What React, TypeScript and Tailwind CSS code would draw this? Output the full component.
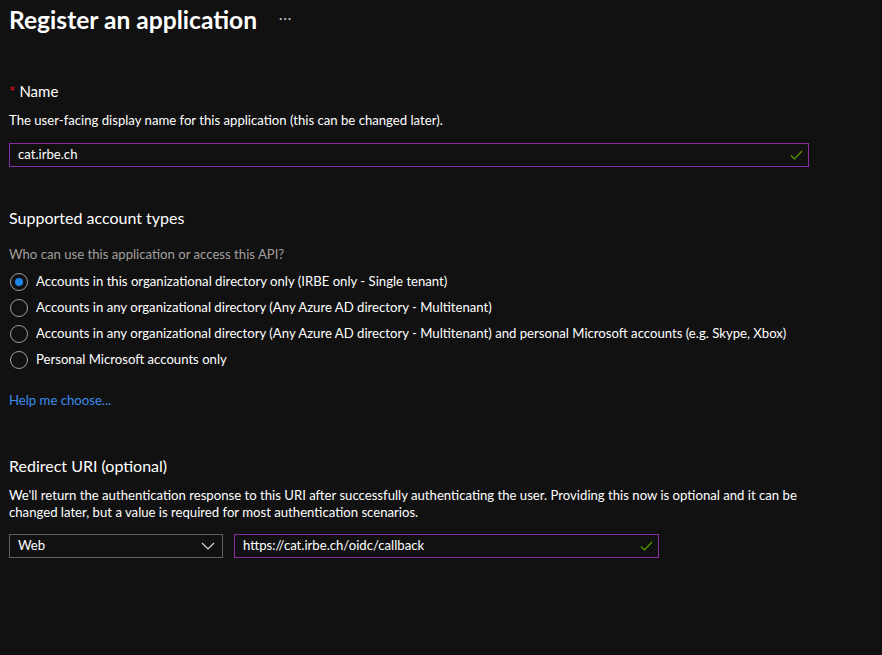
import React from "react";

const options = [
  "Accounts in this organizational directory only (IRBE only - Single tenant)",
  "Accounts in any organizational directory (Any Azure AD directory - Multitenant)",
  "Accounts in any organizational directory (Any Azure AD directory - Multitenant) and personal Microsoft accounts (e.g. Skype, Xbox)",
  "Personal Microsoft accounts only",
];

const Check = () => (
  <svg width="13" height="10" viewBox="0 0 13 10" className="shrink-0">
    <path d="M1 5.5 L4.5 9 L12 1" fill="none" stroke="#57a300" strokeWidth="1.2" />
  </svg>
);

const App: React.FC = () => {
  return (
    <div
      className="w-[882px] h-[655px] bg-[#111111] text-white px-[9px] overflow-hidden"
      style={{ fontFamily: "Lato, 'Noto Sans', sans-serif" }}
    >
      {/* Header */}
      <div className="flex items-center h-[40px] pt-[1px]">
        <h1 className="text-[24.6px] font-bold leading-none">Register an application</h1>
        <span className="ml-[22px] text-[13px] text-[#c8c6c4] tracking-[1px] -mt-[4px]">···</span>
      </div>

      {/* Name */}
      <div className="mt-[41px] flex items-center text-[15px] leading-[20px]">
        <span className="text-[#e81123] mr-[4px]">*</span>
        <span>Name</span>
      </div>
      <p className="mt-[11px] text-[13.15px] leading-[17px]">
        The user-facing display name for this application (this can be changed later).
      </p>
      <div className="mt-[14px] w-[800px] h-[24px] border border-[#8a2da5] flex items-center justify-between pl-[8px] pr-[5px] text-[13.15px]">
        <span>cat.irbe.ch</span>
        <Check />
      </div>

      {/* Supported account types */}
      <h2 className="mt-[41px] text-[16px] leading-[20px]">Supported account types</h2>
      <p className="mt-[18px] text-[13.15px] leading-[17px] text-[#a19f9d]">
        Who can use this application or access this API?
      </p>
      <div className="mt-[6px] flex flex-col">
        {options.map((o, i) => (
          <div key={o} className="flex items-center h-[26px] text-[13.15px]">
            <span className="w-[18px] h-[18px] rounded-full border border-[#a19f9d] flex items-center justify-center mr-[8px] ml-[1px]">
              {i === 0 && <span className="w-[8px] h-[8px] rounded-full bg-[#1a86ee]" />}
            </span>
            <span>{o}</span>
          </div>
        ))}
      </div>

      <a className="block mt-[19px] text-[13.15px] leading-[17px] text-[#3b8ced]">Help me choose...</a>

      {/* Redirect URI */}
      <h2 className="mt-[47px] text-[16px] leading-[20px]">Redirect URI (optional)</h2>
      <p className="mt-[11px] text-[13.15px] leading-[17px] w-[800px]">
        We'll return the authentication response to this URI after successfully authenticating the user. Providing this now is optional and it can be changed later, but a value is required for most authentication scenarios.
      </p>
      <div className="mt-[13px] flex gap-[11px]">
        <div className="w-[214px] h-[24px] border border-[#605e5c] flex items-center justify-between pl-[8px] pr-[7px] text-[13.15px]">
          <span>Web</span>
          <svg width="14" height="8" viewBox="0 0 14 8">
            <path d="M1 1 L7 7 L13 1" fill="none" stroke="#e1dfdd" strokeWidth="1.1" />
          </svg>
        </div>
        <div className="w-[425px] h-[24px] border border-[#8a2da5] flex items-center justify-between pl-[8px] pr-[5px] text-[13.15px]">
          <span>https://cat.irbe.ch/oidc/callback</span>
          <Check />
        </div>
      </div>
    </div>
  );
};

export default App;
